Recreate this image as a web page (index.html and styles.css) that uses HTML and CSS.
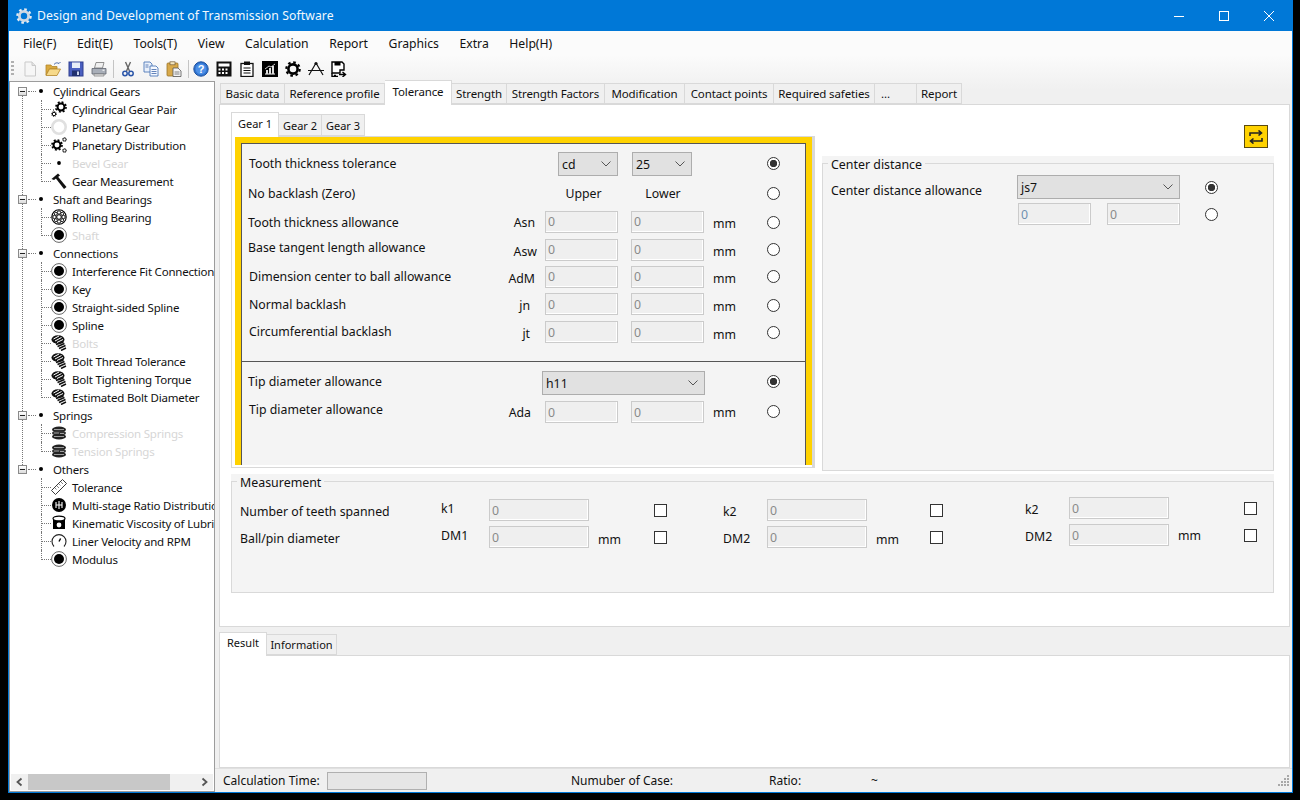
FILE: index.html
```html
<!DOCTYPE html>
<html lang="en">
<head>
<meta charset="utf-8">
<title>Design and Development of Transmission Software</title>
<link rel="stylesheet" href="styles.css">
</head>
<body>
<svg class="defs" width="0" height="0">
  <defs>
    <symbol id="i-gear" viewBox="0 0 16 16">
      <circle cx="8" cy="8" r="4.6" fill="none" stroke="#000" stroke-width="2.6"/>
      <circle cx="8" cy="8" r="6.7" fill="none" stroke="#000" stroke-width="2.2" stroke-dasharray="2.6 2.66"/>
    </symbol>
    <symbol id="i-pair" viewBox="0 0 16 16">
      <use href="#i-gear" x="4" y="0" width="12" height="12"/>
      <use href="#i-gear" x="0" y="10" width="6" height="6"/>
      <path d="M2 9h1M4 8h1" stroke="#000" stroke-width="1"/>
    </symbol>
    <symbol id="i-dist" viewBox="0 0 16 16">
      <use href="#i-gear" x="0" y="2" width="12" height="12"/>
      <use href="#i-gear" x="11" y="0" width="5" height="5"/>
      <use href="#i-gear" x="11" y="11" width="5" height="5"/>
    </symbol>
    <symbol id="i-ring" viewBox="0 0 16 16"><circle cx="8" cy="8" r="6.7" fill="none" stroke="#e0e0e0" stroke-width="2.6"/></symbol>
    <symbol id="i-dot" viewBox="0 0 16 16"><circle cx="8" cy="8" r="1.9" fill="#000"/></symbol>
    <symbol id="i-meas" viewBox="0 0 16 16">
      <path d="M0.500 6 L7 .5 L9 2.500 L3 7Z" fill="#111"/>
      <path d="M6 2.500 L15.500 14 L13 16 L4.500 5Z" fill="#111"/>
    </symbol>
    <symbol id="i-bearing" viewBox="0 0 16 16">
      <circle cx="8" cy="8" r="7.2" fill="#fff" stroke="#000" stroke-width="1.1"/>
      <circle cx="8" cy="8" r="2.3" fill="none" stroke="#000"/>
      <g fill="#fff" stroke="#000" stroke-width=".9">
        <circle cx="8" cy="3.5" r="1.7"/><circle cx="8" cy="12.5" r="1.7"/>
        <circle cx="3.5" cy="8" r="1.7"/><circle cx="12.5" cy="8" r="1.7"/>
        <circle cx="4.8" cy="4.8" r="1.5"/><circle cx="11.2" cy="4.8" r="1.5"/>
        <circle cx="4.8" cy="11.2" r="1.5"/><circle cx="11.2" cy="11.2" r="1.5"/>
      </g>
    </symbol>
    <symbol id="i-disc" viewBox="0 0 16 16">
      <circle cx="8" cy="8" r="7.4" fill="#fff" stroke="#555" stroke-width=".9"/>
      <circle cx="8" cy="8" r="5" fill="#000"/>
    </symbol>
    <symbol id="i-bolt" viewBox="0 0 16 16">
      <ellipse cx="7" cy="4.5" rx="6.500" ry="4.300" fill="#111"/>
      <path d="M2.500 4 L8 1 M4 6 L10.500 2.500 M6 7.500 L12 4.500" stroke="#fff" stroke-width="1"/>
      <path d="M5 9.500 L12.500 7 M6.500 11.500 L13.500 8.500 M8 13.500 L14.500 10.500 M10 15.500 L15 13" stroke="#111" stroke-width="1.500"/>
    </symbol>
    <symbol id="i-spring" viewBox="0 0 16 16">
      <ellipse cx="8" cy="4.500" rx="7" ry="3" fill="#222"/>
      <ellipse cx="8" cy="8" rx="7" ry="3" fill="#333"/>
      <ellipse cx="8" cy="11.500" rx="7" ry="3" fill="#222"/>
      <path d="M3 4.500h10M3 8h5M9 8.500h4M3 11.500h10" stroke="#bbb" stroke-width=".8"/>
    </symbol>
    <symbol id="i-ruler" viewBox="0 0 16 16">
      <path d="M.5 11.500 L11.500 .5 L15.500 4.500 L4.500 15.500Z" fill="#fff" stroke="#222" stroke-width=".9"/>
      <path d="M4 9 L5.500 10.500M6 7 L8 9M8 5 L9.500 6.500M10 3 L12 5" stroke="#666" stroke-width=".8"/>
    </symbol>
    <symbol id="i-multi" viewBox="0 0 16 16">
      <circle cx="8" cy="8" r="7" fill="#000"/>
      <path d="M5 5v6M8 4v8M11 5v6M5 8h6" stroke="#fff" stroke-width="1.1"/>
    </symbol>
    <symbol id="i-visc" viewBox="0 0 16 16">
      <path d="M2 3.500v10.500h12V3.500" fill="#000"/>
      <ellipse cx="8" cy="3.500" rx="6" ry="2.400" fill="#fff" stroke="#000" stroke-width="1.2"/>
      <circle cx="8" cy="10" r="2.400" fill="#fff"/>
    </symbol>
    <symbol id="i-gauge" viewBox="0 0 16 16">
      <path d="M3 13.500 A7 7 0 1 1 13 13.500" fill="none" stroke="#222" stroke-width="1.1"/>
      <path d="M8 8.500 L9.600 5.500" stroke="#000" stroke-width="1.400"/>
    </symbol>
    <symbol id="t-new" viewBox="0 0 16 16"><path d="M3 1h7l3.500 3.500V15H3Z" fill="#f6f6f6" stroke="#c9c9c9"/><path d="M10 1v3.500h3.500" fill="#e4e4e4" stroke="#c9c9c9"/></symbol>
    <symbol id="t-open" viewBox="0 0 16 16"><path d="M1 4h5l1 1.500h5V8H4.500L1 14Z" fill="#d9a93f" stroke="#b4862a" stroke-width=".8"/><path d="M4.500 8H15.500L12 14.500H1Z" fill="#f6d98a" stroke="#b4862a" stroke-width=".8"/><path d="M9 3.500C10.500 1.500 12.500 1.500 14 2.500L15.500 1" fill="none" stroke="#4a6aa8"/></symbol>
    <symbol id="t-save" viewBox="0 0 16 16"><rect x="1" y="1" width="14" height="14" fill="#4a5fc0" stroke="#2f3f8f"/><rect x="4" y="1.500" width="8" height="5.500" fill="#e8edf8"/><rect x="4" y="9.500" width="8" height="5.500" fill="#20306f"/><rect x="9" y="10.500" width="2" height="3.500" fill="#c9d3ee"/></symbol>
    <symbol id="t-print" viewBox="0 0 16 16"><path d="M5 1.500h8L11.500 7h-8Z" fill="#f0f0f0" stroke="#777" stroke-width=".8"/><path d="M1 7.500h14V13H1Z" fill="#a8aeb8" stroke="#5f6570" stroke-width=".8"/><path d="M3 13h10v2H3Z" fill="#e6e6e6" stroke="#777" stroke-width=".7"/><rect x="11.500" y="8.700" width="2" height="1" fill="#fff"/></symbol>
    <symbol id="t-cut" viewBox="0 0 16 16"><path d="M5.500 1 L9.500 10M10.500 1 L6.500 10" stroke="#666" stroke-width="1.400"/><circle cx="5" cy="12.500" r="2.200" fill="none" stroke="#2a55a8" stroke-width="1.500"/><circle cx="11" cy="12.500" r="2.200" fill="none" stroke="#2a55a8" stroke-width="1.500"/></symbol>
    <symbol id="t-copy" viewBox="0 0 16 16"><path d="M1 1h6l2 2v8H1Z" fill="#e9f0fb" stroke="#4f78b8" stroke-width=".9"/><path d="M7 5h6l2 2v8H7Z" fill="#f6f9ff" stroke="#4f78b8" stroke-width=".9"/><path d="M8.500 8.500h5M8.500 10.500h5M8.500 12.500h5M2.500 4h3M2.500 6h3" stroke="#3f66a8" stroke-width=".8"/></symbol>
    <symbol id="t-paste" viewBox="0 0 16 16"><rect x="1" y="2" width="11" height="13" rx="1" fill="#d8a94a" stroke="#9a7428" stroke-width=".8"/><rect x="4" y=".8" width="5" height="3" fill="#f4e6c0" stroke="#77603a" stroke-width=".7"/><path d="M7 7h5l3 3v5.500H7Z" fill="#f4f4f4" stroke="#555" stroke-width=".8"/><path d="M8.500 11h5M8.500 13h5" stroke="#666" stroke-width=".8"/></symbol>
    <symbol id="t-help" viewBox="0 0 16 16"><circle cx="8" cy="8" r="7.200" fill="#2f74d0" stroke="#1d4f9e"/><circle cx="8" cy="8" r="5.400" fill="#4d8fe6"/><text x="8" y="12" text-anchor="middle" class="help-q">?</text></symbol>
    <symbol id="t-calc" viewBox="0 0 16 16"><rect x=".5" y=".5" width="15" height="15" fill="#111"/><rect x="2.500" y="2.500" width="11" height="3" fill="#fff"/><path d="M2.500 7.500h2v2h-2ZM6 7.500h2v2H6ZM9.500 7.500h2v2h-2ZM2.500 11h2v2h-2ZM6 11h2v2H6ZM9.500 11h2v2h-2Z" fill="#fff"/></symbol>
    <symbol id="t-clip" viewBox="0 0 16 16"><rect x="2" y="2.500" width="12" height="13" fill="#fff" stroke="#111" stroke-width="1.300"/><rect x="5" y=".5" width="6" height="3.500" fill="#111"/><path d="M4.500 7h7M4.500 9.500h7M4.500 12h7" stroke="#111" stroke-width="1.200"/></symbol>
    <symbol id="t-chart" viewBox="0 0 16 16"><rect width="16" height="16" fill="#000"/><path d="M3 13h10" stroke="#fff"/><path d="M4 9h2v4H4ZM7 7h2v6H7ZM10 5h2v8h-2Z" fill="#ddd"/><path d="M3 8 L7 5 L9 6 L13 3" fill="none" stroke="#fff" stroke-width=".8"/></symbol>
    <symbol id="t-compass" viewBox="0 0 16 16"><path d="M8 2 L1 14M8 2 L15 14M0 9.500h16" fill="none" stroke="#111" stroke-width="1.200"/><circle cx="8" cy="2.500" r="1.600" fill="#111"/></symbol>
    <symbol id="t-saveas" viewBox="0 0 16 16"><path d="M1 1h10l2 2v6H9v3H1Z" fill="#fff" stroke="#000" stroke-width="1.400"/><rect x="3.500" y="1" width="6" height="3.500" fill="#000"/><path d="M3 14.500h2M8 13.500h6M11.500 11l3 2.500-3 2.500" fill="none" stroke="#000" stroke-width="1.400"/><path d="M1 12v3.500h6" fill="none" stroke="#000" stroke-width="1.400"/></symbol>
  </defs>
</svg>

<div class="win">
  <header class="titlebar">
    <svg class="app-icon" width="16" height="16"><circle cx="8" cy="8" r="4.600" fill="none" stroke="#cfd8e2" stroke-width="2.800"/><circle cx="8" cy="8" r="6.700" fill="none" stroke="#e6ebf1" stroke-width="2.200" stroke-dasharray="2.600 2.660"/></svg>
    <span class="title-text">Design and Development of Transmission Software</span>
    <div class="winctl">
      <svg width="12" height="12" viewBox="0 0 12 12"><path d="M1 6.500h10" stroke="#fff"/></svg>
      <svg width="12" height="12" viewBox="0 0 12 12"><rect x="1.500" y="1.500" width="9" height="9" fill="none" stroke="#fff"/></svg>
      <svg width="12" height="12" viewBox="0 0 12 12"><path d="M1 1l10 10M11 1L1 11" stroke="#fff"/></svg>
    </div>
  </header>
  <nav class="menubar">
    <span>File(F)</span><span>Edit(E)</span><span>Tools(T)</span><span>View</span><span>Calculation</span><span>Report</span><span>Graphics</span><span>Extra</span><span>Help(H)</span>
  </nav>
  <div class="toolbar">
    <span class="grip"></span>
    <svg class="tb"><use href="#t-new"/></svg>
    <svg class="tb"><use href="#t-open"/></svg>
    <svg class="tb"><use href="#t-save"/></svg>
    <svg class="tb"><use href="#t-print"/></svg>
    <span class="tsep"></span>
    <svg class="tb"><use href="#t-cut"/></svg>
    <svg class="tb"><use href="#t-copy"/></svg>
    <svg class="tb"><use href="#t-paste"/></svg>
    <span class="tsep t2"></span>
    <svg class="tb"><use href="#t-help"/></svg>
    <svg class="tb"><use href="#t-calc"/></svg>
    <svg class="tb"><use href="#t-clip"/></svg>
    <svg class="tb"><use href="#t-chart"/></svg>
    <svg class="tb"><use href="#i-gear"/></svg>
    <svg class="tb"><use href="#t-compass"/></svg>
    <svg class="tb"><use href="#t-saveas"/></svg>
  </div>

  <div class="body">
    <aside class="treepane">
      <div class="tree">
        <div class="root"><span class="exp"></span><span class="hdots"></span><span class="rdot"></span><span>Cylindrical Gears</span></div>
        <div class="node"><span class="conn"></span><svg class="ni"><use href="#i-pair"/></svg><span>Cylindrical Gear Pair</span></div>
        <div class="node"><span class="conn"></span><svg class="ni"><use href="#i-ring"/></svg><span>Planetary Gear</span></div>
        <div class="node"><span class="conn"></span><svg class="ni"><use href="#i-dist"/></svg><span>Planetary Distribution</span></div>
        <div class="node off"><span class="conn"></span><svg class="ni"><use href="#i-dot"/></svg><span>Bevel Gear</span></div>
        <div class="node"><span class="conn last"></span><svg class="ni"><use href="#i-meas"/></svg><span>Gear Measurement</span></div>
        <div class="root"><span class="exp"></span><span class="hdots"></span><span class="rdot"></span><span>Shaft and Bearings</span></div>
        <div class="node"><span class="conn"></span><svg class="ni"><use href="#i-bearing"/></svg><span>Rolling Bearing</span></div>
        <div class="node off"><span class="conn last"></span><svg class="ni"><use href="#i-disc"/></svg><span>Shaft</span></div>
        <div class="root"><span class="exp"></span><span class="hdots"></span><span class="rdot"></span><span>Connections</span></div>
        <div class="node"><span class="conn"></span><svg class="ni"><use href="#i-disc"/></svg><span>Interference Fit Connection</span></div>
        <div class="node"><span class="conn"></span><svg class="ni"><use href="#i-disc"/></svg><span>Key</span></div>
        <div class="node"><span class="conn"></span><svg class="ni"><use href="#i-disc"/></svg><span>Straight-sided Spline</span></div>
        <div class="node"><span class="conn"></span><svg class="ni"><use href="#i-disc"/></svg><span>Spline</span></div>
        <div class="node off"><span class="conn"></span><svg class="ni"><use href="#i-bolt"/></svg><span>Bolts</span></div>
        <div class="node"><span class="conn"></span><svg class="ni"><use href="#i-bolt"/></svg><span>Bolt Thread Tolerance</span></div>
        <div class="node"><span class="conn"></span><svg class="ni"><use href="#i-bolt"/></svg><span>Bolt Tightening Torque</span></div>
        <div class="node"><span class="conn last"></span><svg class="ni"><use href="#i-bolt"/></svg><span>Estimated Bolt Diameter</span></div>
        <div class="root"><span class="exp"></span><span class="hdots"></span><span class="rdot"></span><span>Springs</span></div>
        <div class="node off"><span class="conn"></span><svg class="ni"><use href="#i-spring"/></svg><span>Compression Springs</span></div>
        <div class="node off"><span class="conn last"></span><svg class="ni"><use href="#i-spring"/></svg><span>Tension Springs</span></div>
        <div class="root"><span class="exp"></span><span class="hdots"></span><span class="rdot"></span><span>Others</span></div>
        <div class="node"><span class="conn"></span><svg class="ni"><use href="#i-ruler"/></svg><span>Tolerance</span></div>
        <div class="node"><span class="conn"></span><svg class="ni"><use href="#i-multi"/></svg><span>Multi-stage Ratio Distribution</span></div>
        <div class="node"><span class="conn"></span><svg class="ni"><use href="#i-visc"/></svg><span>Kinematic Viscosity of Lubricant</span></div>
        <div class="node"><span class="conn"></span><svg class="ni"><use href="#i-gauge"/></svg><span>Liner Velocity and RPM</span></div>
        <div class="node"><span class="conn last"></span><svg class="ni"><use href="#i-disc"/></svg><span>Modulus</span></div>
      </div>
      <div class="hscroll">
        <svg class="sarrow" viewBox="0 0 17 16"><path d="M10.500 4.500L6.500 8l4 3.500" fill="none" stroke="#555" stroke-width="1.800"/></svg>
        <div class="strack"><div class="sthumb"></div></div>
        <svg class="sarrow" viewBox="0 0 17 16"><path d="M6.500 4.500L10.500 8l-4 3.500" fill="none" stroke="#555" stroke-width="1.800"/></svg>
      </div>
    </aside>

    <main class="main">
      <div class="tabs">
        <span class="tab w65">Basic data</span>
        <span class="tab w100">Reference profile</span>
        <span class="tab active w67">Tolerance</span>
        <span class="tab w55">Strength</span>
        <span class="tab w98">Strength Factors</span>
        <span class="tab w80">Modification</span>
        <span class="tab w89">Contact points</span>
        <span class="tab w101">Required safeties</span>
        <span class="tab w42">...</span>
        <span class="tab w45">Report</span>
      </div>
      <section class="page">
        <div class="top">
          <div class="leftcol">
            <div class="subtabs">
              <span class="stab active">Gear 1</span>
              <span class="stab">Gear 2</span>
              <span class="stab">Gear 3</span>
            </div>
            <div class="panel">
              <div class="frame">
                <div class="inner">
                  <div class="grid">
                    <span class="lab l1 up1">Tooth thickness tolerance</span>
                    <span></span>
                    <div class="select s-small e"><span>cd</span><svg class="chev" viewBox="0 0 10 6"><path d="M.5 .5L5 5l4.500-4.500" fill="none" stroke="#555"/></svg></div>
                    <div class="select s-small s1"><span>25</span><svg class="chev" viewBox="0 0 10 6"><path d="M.5 .5L5 5l4.500-4.500" fill="none" stroke="#555"/></svg></div>
                    <span></span>
                    <span class="radio on up1"></span>

                    <span class="lab">No backlash (Zero)</span>
                    <span></span>
                    <span class="colhead ch1">Upper</span>
                    <span class="colhead ch2">Lower</span>
                    <span></span>
                    <span class="radio"></span>

                    <span class="lab dn1">Tooth thickness allowance</span>
                    <span class="sym dn1">Asn</span>
                    <input class="field" disabled value="0">
                    <input class="field f2" disabled value="0">
                    <span class="unit dn2">mm</span>
                    <span class="radio dn1"></span>

                    <span class="lab up2">Base tangent length allowance</span>
                    <span class="sym r8 dn2">Asw</span>
                    <input class="field" disabled value="0">
                    <input class="field f2" disabled value="0">
                    <span class="unit dn2">mm</span>
                    <span class="radio"></span>

                    <span class="lab l1">Dimension center to ball allowance</span>
                    <span class="sym dn2">AdM</span>
                    <input class="field" disabled value="0">
                    <input class="field f2" disabled value="0">
                    <span class="unit dn2">mm</span>
                    <span class="radio"></span>

                    <span class="lab l1">Normal backlash</span>
                    <span class="sym r15 dn1">jn</span>
                    <input class="field" disabled value="0">
                    <input class="field f2" disabled value="0">
                    <span class="unit dn2">mm</span>
                    <span class="radio dn1"></span>

                    <span class="lab l1 up1">Circumferential backlash</span>
                    <span class="sym r15 dn1">jt</span>
                    <input class="field" disabled value="0">
                    <input class="field f2" disabled value="0">
                    <span class="unit dn2">mm</span>
                    <span class="radio"></span>
                  </div>
                  <hr class="divider">
                  <div class="grid grid2">
                    <span class="lab up2">Tip diameter allowance</span>
                    <div class="select s-wide"><span>h11</span><svg class="chev" viewBox="0 0 10 6"><path d="M.5 .5L5 5l4.500-4.500" fill="none" stroke="#555"/></svg></div>
                    <span class="radio on up2"></span>

                    <span class="lab l1 up3">Tip diameter allowance</span>
                    <span class="sym r14">Ada</span>
                    <input class="field" disabled value="0">
                    <input class="field f2" disabled value="0">
                    <span class="unit">mm</span>
                    <span class="radio up1"></span>
                  </div>
                </div>
              </div>
            </div>
          </div>
          <div class="rightcol">
            <button class="swap" type="button">
              <svg width="16" height="14" viewBox="0 0 16 14"><path d="M2 6V3h11M10.500 .5L13.500 3l-3 2.500M14 8v3H3M5.500 8.500L2.500 11l3 2.500" fill="none" stroke="#222" stroke-width="1.600"/></svg>
            </button>
            <div class="group g-center">
              <fieldset class="fs">
                <legend>Center distance</legend>
                <div class="cgrid">
                  <span class="clab">Center distance allowance</span>
                  <div class="select s-js"><span>js7</span><svg class="chev" viewBox="0 0 10 6"><path d="M.5 .5L5 5l4.500-4.500" fill="none" stroke="#555"/></svg></div>
                  <span class="radio on"></span>
                  <span></span>
                  <div class="pair"><input class="field blue" disabled value="0"><input class="field" disabled value="0"></div>
                  <span class="radio"></span>
                </div>
              </fieldset>
            </div>
          </div>
        </div>
        <div class="group g-meas">
          <fieldset class="fs">
            <legend>Measurement</legend>
            <div class="mrow">
              <div class="mlabels"><span>Number of teeth spanned</span><span>Ball/pin diameter</span></div>
              <div class="mset m1">
                <span class="up2">k1</span><input class="mfield" disabled value="0"><span></span><span class="check"></span>
                <span class="up2">DM1</span><input class="mfield" disabled value="0"><span class="munit dn2">mm</span><span class="check"></span>
              </div>
              <div class="mset m2">
                <span class="dn1">k2</span><input class="mfield" disabled value="0"><span></span><span class="check"></span>
                <span class="dn1">DM2</span><input class="mfield" disabled value="0"><span class="munit dn2">mm</span><span class="check"></span>
              </div>
              <div class="mset m3">
                <span class="dn1">k2</span><input class="mfield" disabled value="0"><span></span><span class="check"></span>
                <span class="dn1">DM2</span><input class="mfield" disabled value="0"><span class="munit">mm</span><span class="check"></span>
              </div>
            </div>
          </fieldset>
        </div>
      </section>

      <div class="lowertabs">
        <span class="ltab active">Result</span>
        <span class="ltab">Information</span>
      </div>
      <section class="output"></section>
      <footer class="status">
        <span>Calculation Time:</span>
        <span class="timebox"></span>
        <span></span>
        <span>Numuber of Case:</span>
        <span>Ratio:</span>
        <span>~</span>
        <svg class="sgrip" width="12" height="12" viewBox="0 0 12 12"><path d="M9 0h2v2H9ZM6 3h2v2H6ZM9 3h2v2H9ZM3 6h2v2H3ZM6 6h2v2H6ZM9 6h2v2H9ZM0 9h2v2H0ZM3 9h2v2H3ZM6 9h2v2H6ZM9 9h2v2H9Z" fill="#a8a8a8"/></svg>
      </footer>
    </main>
  </div>
</div>
</body>
</html>
```
FILE: styles.css
```css
* { box-sizing: border-box; }
html, body { margin: 0; padding: 0; }
body {
  width: 1300px; height: 800px; overflow: hidden; background: #000;
  font-family: "Noto Sans", "Open Sans", sans-serif; font-size: 12.3px; color: #111;
}
.defs { position: absolute; }
.help-q { font: bold 11px "Liberation Sans", sans-serif; fill: #fff; }

.win {
  width: 1285px; height: 793px; margin-left: 8px;
  border: 1px solid #0078d7; border-top: 0;
  display: flex; flex-direction: column;
  background: linear-gradient(to bottom, #fbfbfb 55px, #f0f0f0 90px);
}
.titlebar {
  height: 31px; flex: none; margin: 0 -1px; background: #0078d7; color: #f2f8fd;
  display: flex; align-items: center; padding-left: 8px;
}
.app-icon { margin-right: 5px; }
.title-text { font-size: 12.2px; letter-spacing: .1px; }
.winctl { margin-left: auto; display: flex; align-items: center; gap: 33px; padding-right: 18px; }

.menubar { height: 25px; flex: none; display: flex; align-items: center; gap: 20.6px; padding-left: 14px; font-size: 12.2px; }
.toolbar { height: 25px; flex: none; display: flex; align-items: center; gap: 7px; }
.grip { width: 3px; height: 16px; margin-right: 1px; margin-left: 2px; background: repeating-linear-gradient(to bottom, #b0b0b0 0 2px, transparent 2px 4px); }
.tb { width: 16px; height: 16px; }
.tsep { width: 1px; height: 18px; background: #c4c4c4; margin: 0 -1px; }
.tsep.t2 { margin-right: -3px; }

.body { flex: 1; display: flex; min-height: 0; }
.treepane {
  width: 206px; flex: none; background: #fff; border: 1px solid #9c9c9c;
  display: flex; flex-direction: column; font-size: 11.5px; letter-spacing: -.2px;
}
.tree { flex: 1; position: relative; overflow: hidden; white-space: nowrap; min-height: 0; }
.tree::before {
  content: ""; position: absolute; left: 12px; top: 12px; height: 375px;
  border-left: 1px dotted #777;
}
.root, .node { height: 18px; display: flex; align-items: center; }
.exp {
  width: 9px; height: 9px; margin-left: 8px; flex: none; position: relative; z-index: 1;
  border: 1px solid #8a8a8a; background: linear-gradient(#fff, #dcdcdc);
}
.exp::after { content: ""; position: absolute; left: 1px; top: 3px; width: 5px; height: 1px; background: #222; }
.hdots { width: 8px; margin: 0 2px 0 1px; border-top: 1px dotted #777; }
.rdot { width: 4px; height: 4px; border-radius: 50%; background: #000; margin-right: 10px; margin-left: 1px; }
.conn { width: 10px; height: 18px; margin-left: 31px; flex: none; position: relative; }
.conn::before { content: ""; position: absolute; left: 0; top: 0; height: 100%; border-left: 1px dotted #777; }
.conn.last::before { height: 10px; }
.conn::after { content: ""; position: absolute; left: 0; top: 9px; width: 10px; border-top: 1px dotted #777; }
.ni { width: 16px; height: 16px; flex: none; margin-right: 5px; }
.node.off { color: #d6d6d6; }

.hscroll { height: 16px; flex: none; margin: 0 1px 1px; display: flex; background: #f0f0f0; }
.sarrow { width: 17px; height: 16px; flex: none; }
.strack { flex: 1; }
.sthumb { width: 142px; height: 100%; background: #c8c8c8; }

.main { flex: 1; min-width: 0; display: flex; flex-direction: column; padding-left: 4px; }
.tabs { height: 23px; flex: none; display: flex; align-items: flex-end; padding-left: 1px; position: relative; z-index: 1; font-size: 11.5px; letter-spacing: -.12px; }
.tab {
  height: 21px; display: flex; align-items: center; justify-content: center; white-space: nowrap;
  background: #f0f0f0; border: 1px solid #d9d9d9; border-left-width: 0;
}
.tab:first-child { border-left-width: 1px; }
.tab.active { height: 25px; margin-bottom: -1px; background: #fff; border-bottom: 0; padding-bottom: 4px; }
.w42 { width: 42px; justify-content: flex-start; padding-left: 6px; }
.w45 { width: 45px; }
.w55 { width: 55px; }
.w65 { width: 65px; }
.w67 { width: 67px; }
.w80 { width: 80px; }
.w89 { width: 89px; }
.w98 { width: 98px; }
.w100 { width: 100px; }
.w101 { width: 101px; }

.page { height: 523px; flex: none; margin-right: 2px; background: #fff; border: 1px solid #d9d9d9; padding: 7px 0 0 11px; }
.top { display: flex; gap: 7px; height: 359px; }
.leftcol { width: 584px; flex: none; }
.subtabs { height: 24px; display: flex; align-items: flex-end; position: relative; z-index: 1; font-size: 11px; }
.stab { width: 43px; height: 22px; display: flex; align-items: center; justify-content: center; background: #f0f0f0; border: 1px solid #d9d9d9; border-left-width: 0; }
.stab.active { width: 48px; height: 25px; margin-bottom: -1px; background: #fff; border-left-width: 1px; border-bottom: 0; padding-bottom: 4px; }
.panel { height: 332px; border: 1px solid #d9d9d9; background: #fff; padding: 0 2px 2px 3px; border-right-width: 3px; }
.frame { height: 328px; width: 577px; border: solid #ffd200; border-width: 6px 6px 0 6px; }
.inner { height: 100%; background: #f4f4f4; border: 1px solid #555; border-bottom: 0; padding-top: 5px; }

.grid {
  display: grid;
  grid-template-columns: 263px 40px 73px 86px 63px 13px;
  grid-template-rows: 30px 28px 29px 27px 27px 28px 28px;
  align-items: center;
}
.lab, .sym, .unit, .radio, .colhead, .munit { position: relative; }
.lab { padding-left: 6px; white-space: nowrap; }
.lab.l1 { padding-left: 7px; }
.sym { text-align: right; padding-right: 10px; }
.r8 { padding-right: 8px; }
.r14 { padding-right: 14px; }
.r15 { padding-right: 15px; }
.colhead { text-align: center; }
.ch1 { left: 2px; }
.ch2 { left: 2px; }
.unit { padding-left: 9px; }
.dn1 { position: relative; top: 1px; }
.dn2 { position: relative; top: 2px; }
.up1 { position: relative; top: -1px; }
.up2 { position: relative; top: -2px; }
.up3 { position: relative; top: -3px; }
.field, .mfield {
  height: 22px; font: inherit; color: #8a8a8a; padding: 0 0 0 2px; margin: 0;
  background: #efefef; border: 1px solid #cbcbcb; box-shadow: inset -1px -1px 0 #fff;
}
.field { width: 73px; }
.mfield { width: 100px; }
.f2 { margin-left: 13px; }
.field.blue { color: #6f8fb0; }
.select {
  height: 24px; background: #e1e1e1; border: 1px solid #adadad; display: flex; align-items: center;
  justify-content: space-between; padding: 0 4px 0 3px;
}
.s-small { width: 60px; }
.select.e { justify-self: end; }
.select.s1 { margin-left: 14px; }
.s-wide, .s-js { width: 163px; }
.chev { width: 10px; height: 6px; margin-right: 2px; }
.radio {
  width: 13px; height: 13px; border-radius: 50%; border: 1px solid #333; background: #fff;
  justify-self: center;
}
.radio.on { background: radial-gradient(circle, #333 0 3.400px, #fff 4px); }
.check { width: 13px; height: 13px; border: 1px solid #333; background: #fff; }
.divider { border: 0; border-top: 1px solid #555; margin: 15px 0 9px; height: 0; }
.grid2 { grid-template-rows: 24px 28px; row-gap: 3px; }
.grid2 > .s-wide { grid-column: 2 / 5; margin-left: 37px; }
.grid2 > .radio.on { grid-column: 6; }

.rightcol { width: 452px; flex: none; display: flex; flex-direction: column; }
.swap {
  width: 24px; height: 23px; margin: 13px 6px 0 auto; padding: 0; background: #ffd200; border: 1px solid #5a4a10;
  display: flex; align-items: center; justify-content: center;
}
.group { background: #f4f4f4; }
.g-center { height: 315px; margin-top: 8px; }
.fs { margin: 0; padding: 0; height: 100%; border: 1px solid #d9d9d9; min-width: 0; }
.fs legend { padding: 0 3px; margin-left: 5px; line-height: 15px; font-size: 12.4px; position: relative; top: 1px; }
.cgrid {
  display: grid; grid-template-columns: 194px 163px 1fr; grid-template-rows: 24px 22px;
  row-gap: 4px; align-items: center; padding-top: 4px;
}
.clab { padding-left: 8px; white-space: nowrap; position: relative; top: 3px; }
.cgrid .radio { justify-self: start; margin-left: 25px; }
.pair { display: flex; justify-content: space-between; padding-left: 1px; }
.g-meas { height: 119px; margin-top: 3px; width: 1043px; }
.mrow { display: flex; padding: 10px 0 0 8px; }
.mlabels { width: 201px; flex: none; display: grid; grid-template-rows: 27px 27px; align-items: center; margin-top: -1px; height: 54px; }
.mset { display: grid; grid-template-rows: 22px 22px; row-gap: 5px; align-items: center; }
.m1 { grid-template-columns: 48px 100px 65px 13px; }
.m2 { grid-template-columns: 44px 100px 63px 13px; margin-left: 56px; }
.m3 { grid-template-columns: 44px 100px 75px 13px; margin-left: 82px; margin-top: -2px; }
.munit { padding-left: 9px; }

.lowertabs { height: 28px; flex: none; display: flex; align-items: flex-end; position: relative; z-index: 1; font-size: 11px; }
.ltab { width: 70px; height: 21px; display: flex; align-items: center; justify-content: center; background: #f0f0f0; border: 1px solid #d9d9d9; border-left-width: 0; }
.ltab.active { width: 48px; height: 24px; margin-bottom: -1px; background: #fff; border-left-width: 1px; border-bottom: 0; padding-bottom: 4px; }
.output { height: 113px; flex: none; margin-right: 2px; background: #fff; border: 1px solid #d9d9d9; }
.status {
  height: 24px; flex: none; margin-left: -4px; padding: 0 2px 0 8px; border-top: 1px solid #e0e0e0;
  display: grid; grid-template-columns: 104px 100px 144px 198px 102px auto 1fr; align-items: center;
  font-size: 12px;
}
.timebox { height: 18px; background: #e6e6e6; border: 1px solid #b0b0b0; }
.sgrip { justify-self: end; }
```
